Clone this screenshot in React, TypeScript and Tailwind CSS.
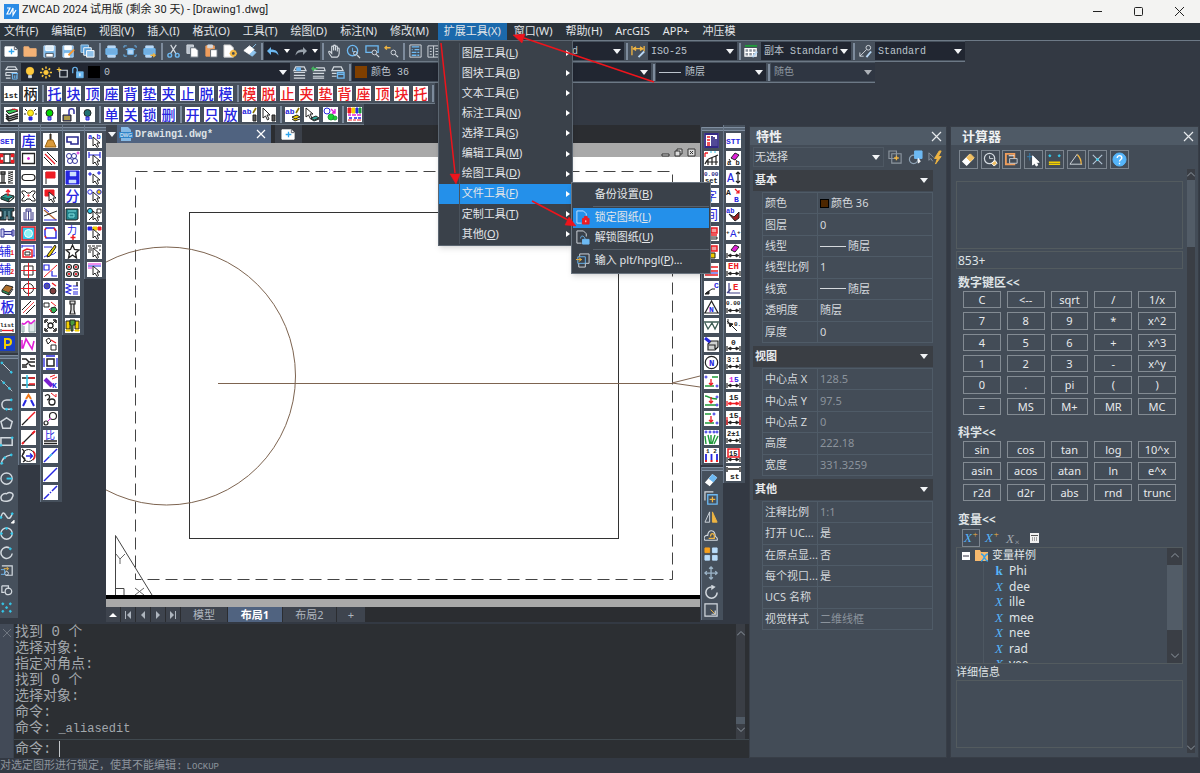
import React from 'react';

type Shape = [d: string, stroke: string, fill?: string, width?: number];
type Label = [text: string, x: number, y: number, color: string, size: number];
type Art = { name: string; shapes: Shape[]; labels: Label[]; big?: string };

const K = '#222222';
const B = '#2626e0';
const R = '#ee1c24';
const G = '#1f9a3a';
const Y = '#f4d000';
const C = '#35c8ea';
const W = '#ffffff';
const L = '#d3d9df';
const S = '#6db9f2';
const O = '#f0b542';
const M = '#e020d8';

const circ = (x: number, y: number, r: number) =>
  `M${x - r} ${y}a${r} ${r} 0 1 0 ${2 * r} 0a${r} ${r} 0 1 0 ${-2 * r} 0z`;

const art = (name: string, shapes: Shape[], labels: Label[] = []): Art => ({ name, shapes, labels });
const char = (text: string, color: string): Art => ({ name: text, shapes: [], labels: [], big: text + '|' + color });

const pointer: Shape = ['M6 4v9l2-2 2 3.5 1.5-1L10 10h3z', K, W, 1];
const dimLine: Shape[] = [
  ['M1 9v5M14 9v5M2 11.5h11', K, 'none', 1.2],
  ['M2 11.5l3-1.5v3zM13 11.5l-3-1.5v3z', K, K, 0.8],
];

/* Left tool columns */
const dieTools: Art[] = [
  art('SET', [], [['SET', 0, 11, B, 8]]),
  art('模板', [['M0 3h14v9H0zM4 3v9M10 3v9', K, 'none', 1.3], ['M0 3h3v3H0zM11 3h3v3h-3zM0 9h3v3H0zM11 9h3v3h-3z', R, R, 0.5]]),
  art('弹簧', [['M1 2h4v2H1zM2 4v9M4 4v9M0 13h6', K, 'none', 1.3], ['M8 2h5M8 4l5-2M8 6l5-2M8 8l5-2M8 10l5-2M8 12l5-2M8 13h5', K]]),
  art('出件', [['M1 9l5-3 8 2-5 3z', K, '#2a9d94'], ['M1 9v2l8 3v-3M9 14l5-4V8', K, '#1d6f60'], ['M8 8V2M6 4l2-2 2 2', R, 'none', 1.3]]),
  art('模座', [['M0 1h14v3h-2v6h2v3H8V9H6v4H0v-3h2V4H0z', K, '#24505c'], ['M5 4v8M9 4v8', '#7fb2bc']]),
  art('螺钉', [['M1 4h3v8H1zM4 6.5h8v3H4M12 5v6h2V5z', '#3a3a9c', '#c8c8f0']]),
  art('辅1', [], [['辅', -1, 12, B, 12], ['1', 10, 11, R, 7]]),
  art('辅2', [], [['辅', -1, 12, B, 12], ['2', 10, 12, R, 7]]),
  art('块体', [['M2 9l4-5 7 2-4 6z', K, '#b0702c'], ['M2 9v2l7 3v-2M9 14l4-6', K, '#2b8a50']]),
  char('板', B),
  art('list', [['M1 11v3M13 11v3', K], ['M2 12.5h11', R, 'none', 1.3]], [['list', 0, 9, K, 6]]),
];

const drawTools: Art[] = [
  art('直线', [['M2 2l10 10', L], [circ(2, 2, 1) + circ(12, 12, 1), C, C]]),
  art('构造线', [['M1 1l12 12', L, 'none', 0.8], [circ(4, 4, 1) + circ(10, 10, 1), C, C]]),
  art('多段线', [['M12 2H7a5 5 0 0 0 0 10h5', L, 'none', 1.6], [circ(7, 12, 1) + circ(12, 12, 1) + circ(12, 2, 1), C, C]]),
  art('多边形', [['M7 2l6 4-2 7H3L1 6z', L, 'none', 1.6]]),
  art('矩形', [['M1 3h12v8H1z', L, 'none', 1.6], [circ(1, 11, 1) + circ(13, 3, 1), C, C]]),
  art('圆弧', [['M1 12C2 6 6 3 12 2', L, 'none', 1.6], [circ(2, 11, 1) + circ(5, 5, 1) + circ(12, 2, 1), C, C]]),
  art('圆', [[circ(7, 7, 6), L, 'none', 1.5], ['M7 7h6', C, 'none', 2]]),
  art('云线', [['M2 11C-1 6 4 3 7 4c4-3 9 0 6 4-1 4-7 5-11 3z', L, 'none', 1.6]]),
  art('样条', [['M1 9c2-8 4-4 6-1s4 3 6-3', L, 'none', 1.5], [circ(1, 9, 1) + circ(13, 5, 1), C, C], ['M15 12v3h-3z', W, W]]),
  art('椭圆', [[circ(7, 7, 6), L, 'none', 1.5], [circ(7, 1.5, 1) + circ(1.5, 7, 1) + circ(12.5, 7, 1), C, C]]),
  art('椭圆弧', [['M10 2a6 6 0 1 0 3 6', L, 'none', 1.6], [circ(11, 3, 1), C, C]]),
  art('插入块', [['M2 2h11v10H6', L, 'none', 1.3], [circ(7, 10, 2), L], ['M1 6h4v5H1', S], ['M4 5h5M7 3l2 2-2 2', O]]),
  art('创建块', [['M2 3h7v3M2 3v7h3', L, 'none', 1.3], [circ(9, 9, 3.5), L, 'none', 1.3]]),
  art('点', [[circ(3, 3, 1) + circ(11, 3, 1) + circ(7, 7, 1) + circ(3, 11, 1) + circ(11, 11, 1), C, C]]),
];

const shapeTools: Art[] = [
  char('库', B),
  art('方孔', [['M1.5 2.5h12v10h-12z', K, 'none', 1.3], [circ(7.5, 7.5, 1), M, M]]),
  art('长圆', [['M4 4.5h7a3 3 0 0 1 0 6H4a3 3 0 0 1 0-6z', K, 'none', 1.2]]),
  art('异形', [['M1 3h3l2 2h3l2-2h3v2l-2 2v2l2 2v2h-3l-2-2H6l-2 2H1v-2l2-2V7L1 5z', K], [circ(7.5, 7.5, 0.7), R]]),
  art('导柱', [['M3 5v8h9V5M5 13V4h5v9M5 4V2h5v2M7.5 4v9', '#40408a', '#e4e0f0']]),
  art('外框圆', [['M1 1h13v13H1z', R, C, 1.5], [circ(7.5, 7.5, 4), W, '#8ff4f4']]),
  art('外形标注', [['M1 2h12M1 1v3M13 1v11M11 12h3', B], ['M2 7l4-2 5 1v7H2z', R, 'none', 1.5], ['M4 8h5v3H4z', K]]),
  art('方心', [['M3 3h9v9H3z', K], ['M7.5 0v15M0 7.5h15', R]]),
  art('圆心', [[circ(7.5, 7.5, 5), K], ['M7.5 0v15M0 7.5h15', R]]),
  art('平行线', [['M1 10L10 1M5 14l9-9', K], ['M2 13L13 2', R, 'none', 0.8]]),
  art('轮廓', [['M1 6v8h2V8M8 5v9h6V3', '#8fa8a8', '#dfe8e8'], ['M1 5c3 4 5-4 7-1s3 1 6-2', M, 'none', 1.6]]),
  art('折线', [['M1 3v8h1L5 2l6 10 2-8', M, 'none', 1.6]]),
  art('折弯', [['M1 4h4l3 3h6M1 10h4l3-3M8 9l2 2h4M9 4h5M1 12h5', K, 'none', 1.4]]),
  art('交叉', [['M1 4h13M1 11h13', K, 'none', 1.5], ['M8 4h6M8 10h6', R, 'none', 1.5], ['M6 1v13', C, 'none', 1.6]]),
  art('角度', [['M2 13L5 7M13 13l-3-6', B, 'none', 2], ['M5 6l2.5-4L10 6', '#f07818', 'none', 2]]),
  art('斜线虚', [['M1 14l6-6', K, 'none', 1.3], ['M7 8l7-7', R, 'none', 1.4]]),
  art('斜线', [['M2 13L13 2', K, 'none', 1.3], ['M1 14l2-2M11 4l3-3', R, 'none', 2]]),
  art('旋转', [[circ(7.5, 7.5, 6), K], ['M1 1c5 3 0 6 0 7s6 3 1 6', K, 'none', 1.4], ['M5 8h6M9 5.5L11.5 8 9 10.5', B, 'none', 1.3], ['M12 3a6 6 0 0 1 0 9', R, 'none', 1.5]]),
];

const editTools: Art[] = [
  art('清理', [['M7 1h1v6H7z', K, '#a05c18'], ['M5 7h5l3 7H2z', '#9b6410', '#d99a3a']]),
  art('断线', [['M2 3l10 10', R, 'none', 1.3], ['M4 1l10 10M1 6l8 8', K]]),
  art('红旗', [['M3 2v12', K], ['M3 2h9v6H3z', R, R]]),
  art('选旗', [['M2 2h9v6H2z', R, R], pointer]),
  art('修剪', [['M1 3l12 10', '#b06030', 'none', 1.3], ['M1 9L14 4', K], ['M1 13h13M1 1l5 4', B]]),
  art('倒角', [['M3 2h8l2 3v7H3l-1-3V4z', B, 'none', 1.4], ['M2 4l1-2M11 2l2 3M2 10l1 2', R, 'none', 1.5]]),
  art('绘线', [['M1 3h8M1 13c5-3 9-1 12-5', B], ['M12 1L5 10l-1 3 3-1 6-9z', K, Y]]),
  art('移角', [['M1 2h5v5H1zM9 8v5h5', B, 'none', 1.2], ['M1 14L14 2', R]]),
  art('移圆', [[circ(4, 5, 3), B, '#5050a0'], [circ(10, 10, 3), K, '#804040'], ['M9 2l4 3', R, 'none', 1.3]]),
  art('移多边', [['M1 3h5v4H1z', K], ['M8 8l4-1 2 3-3 3-3-1z', K, '#30b050'], ['M8 2l5 4M6 9l3 3', R]]),
  art('阵列', [['M2 2h3M2 2v3M13 2h-3M13 2v3M2 13v-3M2 13h3M13 13h-3M13 13v-3', K, 'none', 1.6], [circ(7.5, 7.5, 2.5), K, 'none', 1.3], ['M3 3l2 2M12 3l-2 2M3 12l2-2M12 12l-2-2', K]]),
  art('复制形', [['M3 3l3-2 2 3-3 3zM8 8h5v5H8z', K], ['M8 3l5 3', R, 'none', 1.3]]),
  art('缩放', [['M3 1h9M3 14h9M1 3v9M14 3v9', B, 'none', 1.3], ['M4 4h7v7H4z', K, 'none', 1.5]]),
  art('快捷', [['M2 5l7 7', '#7a20d0', 'none', 4], ['M7 3l5-2M9 5l5-2', R]], [['K', 9, 14, B, 8]]),
  art('反转', [['M2 4c4-4 7 2 2 4', K, 'none', 1.3], [circ(9, 10, 3), K, 'none', 1.3], ['M8 1l5 4V2', R]]),
  art('连接', [[circ(10, 5, 3.5) + circ(3, 12, 2), K, 'none', 1.2], ['M5 10l3-3', M]]),
  art('比', [['M1 11h13M1 13.5h13', K, 'none', 1.4]], [['比', 2, 9, B, 10]]),
  art('虚线一', [['M1 14L14 1', B, 'none', 1.5], ['M6 9l3-3', C, 'none', 1.5]]),
  art('虚线二', [['M1 14L14 1', B, 'none', 1.5]]),
  art('虚线三', [['M1 14l5-5M7 8l1-1M9 6l5-5', B, 'none', 1.5]]),
];

const assistTools: Art[] = [
  art('视口', [['M2 4h11v7H6v-2H2z', '#2a2a90', 'none', 1.6]]),
  art('圆组', [[circ(4, 5, 2.5) + circ(9, 5, 2.5) + circ(5, 10, 2.5) + circ(10, 10, 2.5), '#34349c'], [circ(13, 2, 1), M]]),
  art('保存', [['M1 1h13v13H1z', B, B], ['M5 2h6v4H5zM4 10h7v3H4z', '#cfe0ff', '#cfe0ff', 0.5]]),
  char('分', B),
  art('终端', [['M1 2h12v10l-2 1H1z', K, '#23838c'], ['M3 4h8M4 7h5v3H4z', '#80e0e0']]),
  art('力', [['M8 10v5M5.5 12.5h5', R, 'none', 1.5]], [['力', 2, 9, B, 10]]),
  art('星形', [['M7.5 1l2 4.5 4.5.5-3.5 3 1 5-4-3-4 3 1-5L1 6l4.5-.5z', K, 'none', 1.3]]),
  art('四孔', [[circ(4, 4, 2.5) + circ(11, 4, 2.5) + circ(4, 11, 2.5) + circ(11, 11, 2.5), K, '#ccc', 1.1], [circ(4, 4, 0.7) + circ(11, 4, 0.7) + circ(4, 11, 0.7) + circ(11, 11, 0.7), R, R]]),
  art('弹簧组', [['M1 3l5 2-5 2 5 2-5 2 5 2M8 5h5M8 8h5M8 11h5M8 13h5', B, 'none', 1.2], ['M12 1v4', K, 'none', 1.4]]),
  art('冲头', [['M5 1h5v3H5zM6 4v6l-1 4h5l-1-4V4', K, '#ddd', 1.2]]),
  art('镶件', [['M1 3h4v8H1zM10 3h4v8h-4z', K, Y], ['M5 2h5v5H8v6H6V7H5z', K, '#4a9a40'], ['M1 12h4v1H1zM10 12h4v1h-4z', Y, Y]]),
];

const pickTools: Art[] = [
  art('文字选', [pointer], [['a b', 1, 6, B, 7]]),
  art('尺寸选', [['M2 1v6M13 1v6M2 4h11', B, 'none', 1.2], pointer]),
  art('点选', [[circ(3, 4, 1.2) + circ(12, 3, 1.2), B, '#8888ee'], pointer]),
  art('圆选', [[circ(3, 4, 2.2), B], [circ(12, 4, 2.2), B, Y], pointer]),
  art('类型选', [[circ(3, 4, 2.5), K, C], ['M10 2h4v4h-4zM2 13l8-8', K], pointer]),
  art('颜色选', [['M1 2h4v3H1z', B, B], ['M6 2h4v3H6z', Y, Y], ['M11 2h3v3h-3z', R, R], pointer]),
  art('图案选', [['M1 2h3M5 2h3M9 2h5M2 4h3M7 4h4M1 6h4M1 8h3M12 6h2', K, 'none', 1.2], pointer]),
  art('线型选', [['M1 2h13M1 6h4', M, 'none', 1.2], ['M1 4h13', B], pointer]),
];

/* Right tool columns */
const textTools: Art[] = [
  art('表格', [['M1 1h13v13H1z', '#332a85', W, 1.8], ['M3 4h3M3 7h3M3 10h3M3 12h3', R, 'none', 1.4], ['M8 3v10M10 4v9M12 6v7', '#332a85', 'none', 1.7]]),
  art('曲线网', [['M1 2h3M1 2v4', R, 'none', 1.3], ['M6 1h2M10 1h2', C], ['M1 13C4 6 6 8 14 4M4 9v5M8 7v7M12 5v9M2 11h12', K, 'none', 1.2]]),
  art('0.00 set', [], [['0.00', 0, 6, '#2b2b8a', 6], ['set', 1, 13, K, 7]]),
  art('字', [['M1 2h4', R]], [['字', 1, 13, B, 12]]),
  art('间', [], [['间', 1, 12, B, 13]]),
  art('印章', [['M7 2h6v5H7zM5 9h8', R, '#f6a0a0', 1.5], ['M5 11h8v2H7z', K, '#eee']]),
  art('色板', [['M7 2h6v5H7z', R, '#f0a0a0', 1.5], ['M5 9h6v5H5z', K, Y]]),
  art('红线', [['M1 4h13M1 8h13M1 12h13', R, 'none', 1.5], ['M1 10h13', B]]),
  art('引线C', [['M2 12l6-4h3', K], ['M1 13l4-3v3z', K, K]], [['C', 10, 7, B, 8]]),
  art('三角N', [['M7.5 1L14 13H1zM0 13h15', K, 'none', 1.2]], [['N', 5, 12, B, 8]]),
  art('焊缝', [['M0 4h15M1 5l3 6 4-6 3 6 3-6', '#3c5c54', 'none', 1.3]]),
  art('图层框', [['M4 7l3-3h7v6l-3 3H4zM5 8h6v4', K, '#d0d0d0', 1.2], ['M1 1l5 4', B, 'none', 3]]),
  art('圆N', [[circ(7.5, 7.5, 6.2), K, 'none', 1.2]], [['N', 5, 11, B, 9]]),
  art('坐标下', [['M1 12h9M8 3h6', G, 'none', 1.5], ['M7 5v6M5 9l2 2 2-2', R, 'none', 1.3], [circ(2, 3, 1) + circ(13, 12, 1), B]]),
  art('坐标斜', [['M1 3c4 0 4 3 12 3M1 12h11', G, 'none', 1.5], ['M7 4v6M5 8l2 2 2-2', R, 'none', 1.3], [circ(13, 4, 1) + circ(13, 12, 1), B]]),
  art('坐标左', [['M1 3h6M1 12h9', G, 'none', 1.5], ['M7 5v6M5 9l2 2 2-2', R, 'none', 1.3], [circ(10, 3, 1) + circ(13, 12, 1), B]]),
  art('坐标草', [['M2 14L1 6M6 14L4 5M7 14V5M8 14l3-9M10 14l4-8', G, 'none', 1.4], [circ(2, 2, 1) + circ(6, 2, 1) + circ(10, 2, 1) + circ(13, 2, 1), B]]),
  art('编号', [['M2 6v6M7.5 6v6M13 6v6', B, 'none', 1.8], ['M2 12v2M7.5 12v2M13 12v2', R, 'none', 2]], [['1 2', 2, 5, K, 6]]),
];

const modifyTools: Art[] = [
  art('删除', [['M2 10l7-8 4 3-7 8z', W, W, 1.5], ['M6 6l3-4 4 3-3 4z', S, S, 1.5]]),
  art('复制', [['M1 10V1h9', L, 'none', 1.3], ['M4 4h10v10H4z', S, 'none', 1.4], ['M9 6v6M6 9h6', O, 'none', 1.3]]),
  art('镜像', [['M6 2v11H1z', L], ['M9 2v11h5z', O, O]]),
  art('偏移', [['M1 12h13a3 3 0 0 0-2-4C12 0 4 0 4 7a3 3 0 0 0-3 5z', L, 'none', 1.2], ['M5 10h6V8C11 4 7 4 7 8', O, 'none', 1.3]]),
  art('阵列修改', [['M1 1h5v5H1z', '#f7a01c', '#f7a01c'], ['M9 1h5v5H9zM1 9h5v5H1zM9 9h5v5H9z', '#b9dcfa', '#b9dcfa']]),
  art('移动', [['M7.5 1v13M1 7.5h13M5.5 3l2-2 2 2M5.5 12l2 2 2-2M3 5.5l-2 2 2 2M12 5.5l2 2-2 2', '#9db5c9', 'none', 1.4]]),
  art('旋转修改', [['M8 2a6 6 0 1 0 6 6', L, 'none', 1.6], ['M8 0l4 2-4 3z', L, L, 0.5]]),
  art('缩放修改', [['M1 1h13v13H1z', L, 'none', 1.3], ['M7 7l5 5', O], ['M12 8v4H8', L, 'none', 1.3]]),
];

const dimTools: Art[] = [
  art('STT', [], [['STT', 0, 11, B, 8]]),
  art('擦除ab', [['M5 7l4-5 4 2-4 5z', K, M], ['M3 8l2 3', K]], [['a b', 1, 14, K, 7]]),
  art('A高', [['M12 2v11M10 4l2-2 2 2M10 11l2 2 2-2', K, 'none', 1.2]], [['A', 1, 12, B, 12]]),
  art('AB', [['M9 1l4 4M13 2v3h-3', R, 'none', 1.2]], [['A', 0, 7, K, 8], ['B', 8, 14, B, 8]]),
  art('刷ab', [['M3 7l5 3 5-5v6l-4 3z', K, '#a02020']], [['ab', 0, 6, B, 7]]),
  art('+A+', [], [['A', 4, 12, B, 11], ['+', 0, 9, K, 6], ['+', 11, 9, K, 6]]),
  art('擦尺寸', [['M5 6l4-5 4 2-4 5z', K, M], ...dimLine]),
  art('EH', dimLine, [['EH', 2, 7, R, 9]]),
  art('E坐标', [['M3 2v10h11M1 12l4-4', '#40408a', 'none', 1.2]], [['E', 7, 9, R, 9]]),
  art('0.00', dimLine, [['0.00', 0, 6, K, 6]]),
  art('半径', [['M2 1v5M1 3l10 10M3 5l4 1-3 3z', K, K]], [['0.', 8, 8, K, 6]]),
  art('0', dimLine, [['0', 5, 8, K, 8]]),
  art('3:1', dimLine, [['3:1', 1, 7, K, 7]]),
  art('15彩', dimLine, [['1', 3, 8, M, 8], ['5', 8, 8, B, 8]]),
  art('15红线', [['M1 9v5M14 9v5M2 11.5h11', R, 'none', 1.3], ['M2 11.5l3-1.5v3zM13 11.5l-3-1.5v3z', R, R, 0.8]], [['15', 3, 8, K, 8]]),
  art('15红框', [...dimLine, ['M1 6v8M14 6v8', R, 'none', 1.3]], [['15', 3, 7, K, 8]]),
  art('2±1', dimLine, [['2±1', 1, 7, K, 7]]),
  art('15方', [...dimLine, ['M2 1h11v8H2z', R, 'none', 1.5]], [['15', 3, 8, K, 7]]),
  art('反15', [['M1 1v5M14 1v5M2 3h11', K, 'none', 1.4]], [['st', 4, 13, K, 8]]),
];

/* Toolbars above the drawing */
const plus: Shape = ['M8 5v6M5 8h6', '#2da4ee', 'none', 1.4];
const fileTools: Art[] = [
  art('新建', [['M1 3h10l3 3v7H1z', W, W], ['M11 3v3h3', '#555b66'], plus]),
  art('打开', [['M1 3h5l1 2h7v8H1z', '#f3b276', '#f3b276']]),
  art('存盘', [['M2 2h12v12H2z', '#b9d8f5', '#79b7e8'], ['M4 2h8v5H4z', W, '#dcecf8'], ['M4 10h8v4H4z', '#444d59', '#fff']]),
  art('另存', [['M2 2h11v12H2z', '#b9d8f5', '#79b7e8'], ['M4 2h7v4H4zM4 10h5v4H4z', W, W], ['M8 12l6-6', '#f4962f', 'none', 2]]),
  art('全部存', [['M1 1h8v8H1z', '#a8cdea', '#579dd6'], ['M4 4h8v8H4z', W, '#579dd6'], ['M7 7h8v7H7z', W, '#8fc1e9']]),
];
const plotTools: Art[] = [
  art('打印', [['M4 2h8v3H4zM4 10h8v4H4z', '#b9d8f5', '#b9d8f5'], ['M2 5h12v6H2z', S, '#72afe1']]),
  art('预览', [['M1 4V2h3M12 2h2v2M1 11v2h3M12 13h2v-2', S], ['M5 5h6v6H5zM3 6h10', S, '#b9d8f5']]),
  art('发布', [['M4 2h8v3H4zM4 10h6v4H4z', '#b9d8f5', '#b9d8f5'], ['M2 5h12v6H2z', S, '#72afe1'], ['M9 12h5M12 10l2 2-2 2', O, 'none', 1.4]]),
];
const clipTools: Art[] = [
  art('剪切', [['M5 1l6 10M11 1L5 10', L, 'none', 1.3], [circ(4, 12, 2) + circ(12, 12, 2), S, 'none', 1.5]]),
  art('复制文件', [['M2 1h7v9H2z', L, '#bac3cd'], ['M6 4h5l3 3v7H6z', '#5a6470', W]]),
  art('粘贴', [['M2 2h9v11H2z', '#ef9d5c', '#ef9d5c'], ['M4 1h5v3H4z', L, L], ['M7 6h7v8H7z', '#5a6470', W]]),
  art('特性复制', [['M1 1h7l3 3v10H1z', '#ccc', W], [circ(11, 10, 2.5), O, '#434c57', 2], ['M11 6v2M11 12v2M7 10h2M13 10h2', O, 'none', 1.6]]),
  art('格式刷', [['M8 2l5 4-5 5-6-4z', W, W], ['M11 4l4-4M8 11l3 2 4-4-3-2', '#8ec5ef', '#8ec5ef']]),
];
const zoomTools: Art[] = [
  art('平移', [['M5 14C3 11 1 9 2 8s2 1 3 2V3c0-1 1.500-1 2 0v4-5c0-1 2-1 2 0v5-4c0-1 2-1 2 0v5-3c0-1 2-1 2 0v5c0 2-1 3-2 4z', L, 'none', 1.2]]),
  art('实时缩放', [[circ(7, 7, 5.5), S, 'none', 1.4], ['M7 4v4h3', S], [circ(10, 10, 2), L], ['M12 12l3 3', L, 'none', 1.3]]),
  art('窗口缩放', [['M1 2h13v7H1z', S, 'none', 1.4], [circ(10, 9, 2.5), L, '#4a525e'], ['M12 11l3 3', L, 'none', 1.3]]),
  art('上一个', [['M1 4h6M3 2L1 4l2 2', O, 'none', 1.4], [circ(10, 9, 2.5), L], ['M12 11l3 3', L, 'none', 1.3]]),
];
const panelTools: Art[] = [
  art('特性', [['M2 1h12v13H2z', L], ['M4 3h8M4 6h1M7 6h5M4 9h5M10 9h2M4 12h5M10 12h2', S, 'none', 1.4]]),
  art('设计中心', [['M1 2h13v12H1zM7 2v12', L], ['M3 5h2M3 8h2M3 11h2M9 5h3M9 8h3M9 11h3', L]]),
];
const layerTools: Art[] = [
  art('图层置前', [['M4 2h9l2 4H2zM2 8h12M2 11h12M2 14h12', L, 'none', 1.3], ['M5 3h4v3H5z', S, S]]),
  art('上一图层', [['M6 3h8l1 3H3zM2 9h12M2 12h12M2 14h12', L, 'none', 1.3], ['M1 4h6M3 2L1 4l2 2', '#43b15d', 'none', 1.6]]),
  art('图层状态', [['M4 2h8l2 4H2zM2 9h5M2 12h5', L, 'none', 1.3], ['M8 8h7v6H8zM8 10h7', S, 'none', 1.4]]),
];
const layerManager = art('图层管理器', [['M4 2h8l2 3H2zM2 8h12M2 8v3h5M2 14h5', L, 'none', 1.3], ['M9 9h5v6H9zM8 9h7M11 11v3M13 11v3', S]]);

/* Marks shown inside the layer list */
const layerState: Art[] = [
  art('开', [[circ(8, 6, 5), '#ffc93c', '#ffc93c'], ['M6 12h4v3H6z', L, L]]),
  art('冻结', [[circ(8, 8, 3), '#ffc93c', '#ffc93c'], ['M8 0v3M8 13v3M0 8h3M13 8h3M2.5 2.5l2 2M11.5 11.5l2 2M13.5 2.5l-2 2M2.5 13.5l2-2', '#ffc93c', 'none', 2]]),
  art('视口冻结', [['M5 5h10v9H5z', L, 'none', 1.5], ['M4 1v6M1 4h6', '#ffc93c', 'none', 1.4]]),
  art('锁', [['M6 7h9v8H6z', S, S], ['M1 9V4c0-4 6-4 6 0v3', S, 'none', 1.6], ['M10.5 9v4', W, 'none', 1.5]]),
];

const layerSwitches: Art[] = [
  art('图层集', [['M2 4l9-2 3 2-9 3z', K, '#33c24e'], ['M2 7l3 3 9-3M2 9l3 3 9-3M2 11l3 3 9-3', K, 'none', 1.4], ['M8 2l6 1', R]]),
  art('灯亮', [[circ(7.5, 6, 3), '#b8a000', '#ffee22'], ['M6 10h3v3H6z', B, B], ['M2 2l2 2M13 2l-2 2M1 7h2M14 7h-2', K]]),
  art('灯绿', [[circ(7.5, 6, 3.5), K, '#00d800'], ['M6 10h3v3H6z', B, '#8080e0']]),
  art('解锁层', [['M2 8h8v6H2z', K, '#62628e'], ['M8 8V4c0-3 5-3 5 0v3', '#3e3ea6', 'none', 1.6], ['M3 10h6M3 12h6', Y]]),
  art('灯灭', [[circ(7.5, 6, 3.5), K, '#1f7070'], ['M6 10h3v3H6z', B, '#8080e0']]),
];
const abFind = art('文字查找', [['M11 8h3v6h-3z', K, '#555'], ['M11 6l3-5', '#857000', 'none', 1.6]], [['ab', 0, 7, B, 8]]);
const cursorFind = art('点选查找', [['M2 1v10l2.5-2 2 4 1.5-1-2-4h3z', K, W], ['M11 8h3v6h-3z', K, '#555']]);
const abLayer = art('文字图层', [['M7 10l5-2 3 2-5 2zM7 12l3 2 5-2', K, Y], ['M11 6l3-5', '#857000', 'none', 1.6]], [['ab', 0, 7, B, 8]]);
const cursorLayer = art('点选图层', [['M2 1v9l2.5-2 2 4 1.5-1-2-4h3z', K, W], ['M7 11l5-2 3 2-5 2zM7 12l3 2 5-2', K, '#30a89c']]);
const matchLayer = art('图层匹配', [[circ(4, 4, 3), B], [circ(8, 10, 3) + circ(12, 11, 2), G, '#19d52f'], ['M8 2l4 4M12 2v4H9', M, 'none', 1.4]]);
const palette = art('调色板', [
  ['M1 1h3v5H1z', R, R], ['M5 1h3v5H5z', Y, Y], ['M9 1h2v5H9z', B, B], ['M12 1h2v5h-2z', G, G],
  ['M1 8h3M5 8h4M10 8h4', M, 'none', 1.4], ['M2 11h3M7 11h3M11 11h3', B, 'none', 1.4], ['M1 13h4M6 13h3M10 13h4', R, 'none', 1.2],
]);

const blueFirst = ['托', '块', '顶', '座', '背', '垫', '夹', '止', '脱', '模'];

const Drawing: React.FC<{ art: Art; className: string; box: number }> = ({ art: a, className, box }) => (
  <svg className={className} viewBox={`0 0 ${box} ${box}`} aria-hidden="true">
    {a.shapes.map(([d, stroke, fill, width], i) => (
      <path key={i} d={d} stroke={stroke} fill={fill ?? 'none'} strokeWidth={width ?? 1} />
    ))}
    {a.labels.map(([text, x, y, color, size], i) => (
      <text key={i} x={x} y={y} fill={color} fontSize={size} fontWeight={size > 9 ? 400 : 700} fontFamily="'Liberation Mono', 'Noto Sans CJK SC', monospace">
        {text}
      </text>
    ))}
  </svg>
);

const Tile: React.FC<{ art: Art }> = ({ art: a }) => {
  const [text, color] = (a.big ?? '').split('|');
  return (
    <button aria-label={a.name} className="flex w-[19px] shrink-0 items-center justify-center">
      {text ? (
        <span className="block h-[15px] w-[15px] whitespace-nowrap bg-white text-center text-[14px] font-medium leading-[15px]" style={{ color }}>
          {text}
        </span>
      ) : (
        <Drawing art={a} box={15} className="h-[15px] w-[15px] bg-white" />
      )}
    </button>
  );
};

const Plain: React.FC<{ art: Art }> = ({ art: a }) => (
  <button aria-label={a.name} className="flex w-[19px] shrink-0 items-center justify-center">
    <Drawing art={a} box={16} className="h-[15px] w-[15px]" />
  </button>
);

const Grip = () => <span className="ml-[2px] mr-px h-[17px] w-[2px] shrink-0 bg-[#7d8b9c]" />;

const Down: React.FC = () => (
  <svg viewBox="0 0 8 5" className="h-[5px] w-2 shrink-0" aria-hidden="true">
    <path d="M0 0h8L4 5z" fill="#f2f4f6" />
  </svg>
);

const Combo: React.FC<{ label: string; value: string; className?: string; children?: React.ReactNode }> = ({ label, value, className = '', children }) => (
  <div className={`flex h-[18px] shrink-0 items-center bg-[#212631] px-[3px] text-[#bcc4cd] ${className}`}>
    {children && <span className="mr-1 flex items-center gap-1">{children}</span>}
    <select aria-label={label} className="h-[18px] min-w-0 flex-1 appearance-none bg-transparent font-['Liberation_Mono','Noto_Sans_CJK_SC',monospace] text-[10px] outline-none">
      <option>{value}</option>
    </select>
    <Down />
  </div>
);

const Column: React.FC<{ tools: Art[]; height: string; plain?: boolean; clipped?: boolean }> = ({ tools, height, plain, clipped }) => (
  <div className={`border-[#6c7a8b] bg-[#46505c] ${clipped ? 'w-[18px]' : 'w-[22px] border-l'}`}>
    <div className="mt-[2px] h-1 border-y border-[#7f8ea0] bg-[#596675]" />
    <div className={`grid auto-rows-fr ${clipped ? '-ml-[2px]' : ''} ${height}`}>
      {tools.map((t) => (plain ? <Plain key={t.name} art={t} /> : <Tile key={t.name} art={t} />))}
    </div>
  </div>
);

const menus = ['文件(F)', '编辑(E)', '视图(V)', '插入(I)', '格式(O)', '工具(T)', '绘图(D)', '标注(N)', '修改(M)', '扩展工具(X)', '窗口(W)', '帮助(H)', 'ArcGIS', 'APP+', '冲压模'];

const extItems: [string, string][] = [
  ['图层工具', 'L'], ['图块工具', 'B'], ['文本工具', 'E'], ['标注工具', 'N'], ['选择工具', 'S'],
  ['编辑工具', 'M'], ['绘图工具', 'D'], ['文件工具', 'F'], ['定制工具', 'T'], ['其他', 'O'],
];

const lockArt = art('锁定', [['M9 1H2v13h5M9 1l3 3v2', '#c4e2ff'], ['M8 9h7v6H8zM10 9V7h3v2', R, R], ['M11.5 11v2', W]]);
const unlockArt = art('解锁', [['M9 1H2v13h5M9 1l3 3v3', L], ['M8 10h7v5H8z', S, S], ['M6 9c0-4 4-3 5 1', S]]);
const plotIn = art('输入', [['M5 4V1h10v10h-4M4 11v4h7v-4', L], ['M3 4h8v7H3z', S], ['M1 7h6M4 5l3 2-3 2', O]]);

const SubItem: React.FC<{ text: string; mark: string; tail?: string; icon?: Art; active?: boolean }> = ({ text, mark, tail = ')', icon, active }) => (
  <button className={`flex h-5 items-center text-left ${active ? 'bg-[#2490ea]' : ''}`}>
    <span className="flex w-5 justify-center">{icon && <Drawing art={icon} box={16} className="h-[15px] w-[15px]" />}</span>
    <span className="ml-[2px] whitespace-nowrap">{text}(<u>{mark}</u>{tail}</span>
  </button>
);

const ExtMenu = () => (
  <div className="absolute left-0 top-full z-20 grid h-[206px] w-[135px] auto-rows-fr border border-[#5b6570] bg-[#3a414a] pb-px pt-[2px] text-[#e3e6e9] shadow-md">
    {extItems.map(([text, mark]) => (
      <div key={mark} className={`relative flex ${mark === 'F' ? 'bg-[#2490ea]' : ''}`}>
        <button className="flex flex-1 items-center justify-between pr-[2px] text-left">
          <span className="ml-5 h-full flex-1 content-center border-l border-[#4a535d] pl-[2px]">{text}(<u>{mark}</u>)</span>
          <svg viewBox="0 0 4 6" className="h-[6px] w-1" aria-hidden="true"><path d="M0 0l4 3-4 3z" fill="#fff" /></svg>
        </button>
        {mark === 'F' && (
          <div className="absolute -top-[2px] left-[132px] flex w-[140px] flex-col border border-[#6a747f] bg-[#3a414a] px-px py-[2px] shadow-md">
            <SubItem text="备份设置" mark="B" />
            <hr className="my-px ml-5 border-[#56606b]" />
            <SubItem text="锁定图纸" mark="L" icon={lockArt} active />
            <SubItem text="解锁图纸" mark="U" icon={unlockArt} />
            <hr className="my-px ml-5 border-[#56606b]" />
            <SubItem text="输入 plt/hpgl" mark="P" tail=")..." icon={plotIn} />
          </div>
        )}
      </div>
    ))}
  </div>
);

const TitleBar = () => (
  <header className="flex h-[23px] items-center bg-[#f3f3f2] text-[11px] text-[#222]">
    <svg viewBox="0 0 15 15" className="ml-1 h-[15px] w-[15px]" aria-hidden="true">
      <path d="M0 0h15v15H0z" fill="#2a8be6" />
      <path d="M3 4h3L3 10h3l3-6v7l3-5" stroke="#fff" fill="none" strokeWidth="1.2" />
    </svg>
    <h1 className="ml-[3px] flex-1 pb-[3px] font-[Roboto,'Noto_Sans_CJK_SC',sans-serif]">ZWCAD 2024 试用版 (剩余 30 天) - [Drawing1.dwg]</h1>
    <button aria-label="最小化" className="w-[41px]"><svg viewBox="0 0 11 11" className="mx-auto h-[11px] w-[11px]"><path d="M1 5.5h9" stroke="#222" /></svg></button>
    <button aria-label="最大化" className="w-[41px]"><svg viewBox="0 0 11 11" className="mx-auto h-[11px] w-[11px]"><rect x="1.5" y="1.5" width="8" height="8" rx="1" stroke="#222" fill="none" /></svg></button>
    <button aria-label="关闭" className="w-[41px]"><svg viewBox="0 0 11 11" className="mx-auto h-[11px] w-[11px]"><path d="M1 1l9 9M10 1l-9 9" stroke="#222" /></svg></button>
  </header>
);

const MenuBar = () => (
  <nav className="flex h-[18px] border-b border-[#6d7986] bg-[#2b333b] text-[11px] text-[#e3e6e9]">
    {menus.map((m) => {
      const open = m.startsWith('扩展');
      return (
        <div key={m} className={`relative ${open ? 'mr-[3px] bg-[#1b69ac]' : ''}`}>
          <button className={`h-[17px] whitespace-nowrap ${open ? 'px-[6px]' : 'pl-1 pr-[9px]'}`}>{m}</button>
          {open && <ExtMenu />}
        </div>
      );
    })}
  </nav>
);

const bar = 'flex h-[21px] w-max items-center border-b border-l border-[#6d7986] bg-[#46505c] pl-px';

const Toolbars = () => (
  <div className="h-[84px] bg-[#333943]">
    <div className={bar}>
      {fileTools.map((t) => <Plain key={t.name} art={t} />)}
      <Grip />
      {plotTools.map((t) => <Plain key={t.name} art={t} />)}
      <Grip />
      {clipTools.map((t) => <Plain key={t.name} art={t} />)}
      <Grip />
      <div className="flex h-[18px] w-[56px] items-center justify-around bg-[#212631]">
        <button aria-label="撤销"><svg viewBox="0 0 12 9" className="h-[9px] w-3"><path d="M4 0v2.5c5 0 7 2 7.500 6C10 6 8 5 4 5v3L0 4z" fill="#6db9f2" /></svg></button>
        <svg viewBox="0 0 6 4" className="h-1 w-[6px]"><path d="M0 0h6L3 4z" fill="#fff" /></svg>
        <button aria-label="重做"><svg viewBox="0 0 12 9" className="h-[9px] w-3"><path d="M8 0v2.5C3 2.500 1 4.500.500 8.500 2 6 4 5 8 5v3l4-4z" fill="#98a1ab" /></svg></button>
        <svg viewBox="0 0 6 4" className="h-1 w-[6px]"><path d="M0 0h6L3 4z" fill="#fff" /></svg>
      </div>
      <Grip />
      {zoomTools.map((t) => <Plain key={t.name} art={t} />)}
      <Grip />
      {panelTools.map((t) => <Plain key={t.name} art={t} />)}
      <Combo label="文字样式" value="Standard" className="ml-[83px] w-[97px]" />
      <Grip />
      <Plain art={art('标注样式', [['M1 2v10M14 2v6M2 5h11', O, 'none', 1.4], ['M2 5l3-2v4zM13 5l-3-2v4z', O, O], ['M8 14l6-6', '#b9d8f5', 'none', 2]])} />
      <Combo label="标注样式" value="ISO-25" className="w-[89px]" />
      <Grip />
      <Plain art={art('表格样式', [['M1 2h13', G, 'none', 2], ['M1 5h12v8H1zM5 5v8M9 5v8M1 9h12', W, '#8a939e', 1.3], ['M9 14l5-6', '#b9d8f5', 'none', 2]])} />
      <Combo label="表格样式" value="副本 Standard" className="w-[90px]" />
      <Grip />
      <Plain art={art('引线样式', [[circ(11, 4, 2.5), L], ['M9 6l-7 7M2 13V9M2 13h4', L], ['M9 14l5-6', '#b9d8f5', 'none', 2]])} />
      <Combo label="引线样式" value="Standard" className="w-[90px]" />
    </div>
    <div className={bar}>
      <Plain art={layerManager} />
      <Combo label="图层" value="0" className="w-[269px]">
        {layerState.map((s) => <Drawing key={s.name} art={s} box={16} className="h-[13px] w-3" />)}
        <span className="h-3 w-3 bg-black" />
      </Combo>
      {layerTools.map((t) => <Plain key={t.name} art={t} />)}
      <Grip />
      <Combo label="颜色" value="颜色 36" className="w-[150px]">
        <span className="h-3 w-3 bg-[#7f3f00]" />
      </Combo>
      <Grip />
      <Combo label="线型" value="随层" className="w-[144px]" />
      <Grip />
      <Combo label="线宽" value="随层" className="w-[110px]">
        <span className="h-px w-[22px] bg-[#bcc4cd]" />
      </Combo>
      <Grip />
      <Combo label="打印样式" value="随色" className="w-[104px] opacity-60" />
    </div>
    <div className={bar}>
      <Tile art={art('1st', [], [['1st', 0, 12, K, 8]])} />
      <Tile art={char('柄', K)} />
      <Grip />
      {blueFirst.map((c) => <Tile key={c} art={char(c, B)} />)}
      <Grip />
      {[...blueFirst].reverse().map((c) => <Tile key={c} art={char(c, R)} />)}
      <Grip />
    </div>
    <div className={bar}>
      {layerSwitches.map((t) => <Tile key={t.name} art={t} />)}
      <Grip />
      {['单', '关', '锁', '删'].map((c) => <Tile key={c} art={char(c, B)} />)}
      <Grip />
      {['开', '只', '放'].map((c) => <Tile key={c} art={char(c, B)} />)}
      <Tile art={abFind} />
      <Tile art={cursorFind} />
      <Grip />
      <Tile art={abLayer} />
      <Tile art={cursorLayer} />
      <Tile art={matchLayer} />
      <Grip />
      <Tile art={palette} />
    </div>
  </div>
);

const LeftTools = () => (
  <div className="flex w-[106px] shrink-0 items-start">
    <div>
      <Column clipped tools={[...dieTools, art('P', [['M0 0h15v15H0z', '#1a3fc4', '#1a3fc4'], ['M5 13V3h3a2.5 2.5 0 0 1 0 6H5', Y, 'none', 2]])]} height="h-[222px]" />
      <Column clipped plain tools={drawTools} height="h-[259px]" />
    </div>
    <Column tools={shapeTools} height="h-[334px]" />
    <Column tools={editTools} height="h-[371px]" />
    <Column tools={assistTools} height="h-[204px]" />
    <Column tools={pickTools} height="h-[148px]" />
  </div>
);

const RightTools = () => (
  <div className="ml-px flex w-[48px] shrink-0 items-start">
    <div>
      <Column tools={textTools} height="h-[334px]" />
      <Column plain tools={modifyTools} height="h-[149px]" />
    </div>
    <Column tools={dimTools} height="h-[352px]" />
  </div>
);

const CadCanvas = () => (
  <svg className="min-h-[438px] w-full flex-1 bg-white" fill="none" aria-label="布局1">
    <rect x="29.5" y="14.5" width="537" height="408" stroke="#444" strokeDasharray="12 6" />
    <rect x="83.5" y="55.5" width="429" height="326" stroke="#333" />
    <circle cx="60.5" cy="219" r="129" stroke="#7d6450" />
    <path d="M112 226.5h454M594 219l-28 7 28 4" stroke="#7d6450" />
    <path d="M9.5 438v-59.5L46 438M9.5 431.5H18v7" stroke="#444" />
    <path d="M10 397l4 5 5-5M14 402v5M29 431l9 7M38 431l-9 7" stroke="#666" />
  </svg>
);

const NavTab: React.FC<{ d: string; label: string; bright?: boolean }> = ({ d, label, bright }) => (
  <button aria-label={label} className="flex w-[14px] items-center justify-center bg-[#3e444e]">
    <svg viewBox="0 0 8 8" className="h-2 w-2"><path d={d} fill={bright ? '#fff' : '#aeb5be'} /></svg>
  </button>
);

const Workspace = () => (
  <main className="flex min-w-0 flex-1 flex-col">
    <div className="flex h-[18px] bg-[#2b2d31] text-[#dfe3e7]">
      <button aria-label="文档列表" className="flex w-[11px] items-center justify-center bg-[#3e444e]"><Down /></button>
      <div className="flex w-[154px] items-center bg-[#506380]">
        <svg viewBox="0 0 14 14" className="ml-[2px] h-[14px] w-[14px]" aria-hidden="true">
          <path d="M2 0h7l3 3v11H2z" fill="#85b9e4" />
          <path d="M0 5h14v6H0z" fill="#2f84c8" />
          <text x="1" y="10" fontSize="5" fill="#fff" fontFamily="Liberation Sans">DWG</text>
        </svg>
        <span className="ml-[2px] flex-1 font-['Liberation_Mono',monospace] text-[10px] font-bold">Drawing1.dwg*</span>
        <button aria-label="关闭文档" className="mr-1 w-3">
          <svg viewBox="0 0 12 12" className="h-3 w-3"><path d="M2 2l8 8M10 2l-8 8" stroke="#fff" strokeWidth="1.2" /></svg>
        </button>
      </div>
      <button aria-label="新建文档" className="ml-1 flex w-[27px] items-center justify-center bg-[#3b4049]">
        <Drawing box={16} className="h-[15px] w-[15px]" art={fileTools[0]} />
      </button>
    </div>
    <div className="flex h-[14px] items-end justify-end gap-1 bg-[#a9a9a9] pr-1">
      {['M1 6h7v2H1z', 'M1 3h5v5H1zM3 3V1h5v5H6', 'M1 1h7v7H1zM3 3l3 3M6 3L3 6'].map((d) => (
        <svg key={d} viewBox="0 0 9 9" className="h-[9px] w-[9px]" aria-hidden="true"><path d={d} fill="#ddd" stroke="#333" /></svg>
      ))}
    </div>
    <CadCanvas />
    <div className="h-1 bg-black" />
    <div className="h-2 bg-[#a9a9a9]" />
    <div className="flex h-[15px] gap-px bg-[#2b2d31] text-[11px] leading-[14px] text-[#aeb5be]">
      <NavTab bright label="展开" d="M0 6h8L4 2z" />
      <NavTab label="第一个" d="M1 0h1v8H1zM7 0v8L3 4z" />
      <NavTab label="上一页" d="M6 0v8L2 4z" />
      <NavTab label="下一页" d="M2 0v8l4-4z" />
      <NavTab label="最后" d="M6 0h1v8H6zM1 0v8l4-4z" />
      <button className="w-[46px] bg-[#3e444e]">模型</button>
      <button className="w-[54px] bg-[#506380] font-bold text-white">布局1</button>
      <button className="w-[53px] bg-[#3e444e]">布局2</button>
      <button className="w-[28px] bg-[#3e444e]">+</button>
    </div>
  </main>
);

const log = ['找到 0 个', '选择对象:', '指定对角点:', '找到 0 个', '选择对象:', '命令:'];

const Chevron: React.FC<{ up?: boolean }> = ({ up }) => (
  <svg viewBox="0 0 8 5" className="mx-auto my-[3px] h-[5px] w-2 shrink-0" aria-hidden="true">
    <path d={up ? 'M0 4.500l4-4 4 4' : 'M0 .500l4 4 4-4'} fill="none" stroke="#8d96a0" />
  </svg>
);

const CommandLine = () => (
  <section className="mt-[2px] flex h-[134px] bg-[#2c2f33] font-['Liberation_Mono','Noto_Sans_CJK_SC',monospace] text-[14px] text-[#a3a8ad]">
    <button aria-label="关闭命令行" className="flex w-[14px] items-start justify-center border-r border-[#3a424d] bg-[#424a57] pt-1">
      <svg viewBox="0 0 10 10" className="h-[10px] w-[10px]"><path d="M1 1l8 8M9 1l-8 8" stroke="#6f7680" /></svg>
    </button>
    <div className="flex flex-1 flex-col">
      <div className="flex h-[115px]">
        <div className="flex-1 pl-px leading-4">
          {log.map((line, i) => <p key={i}>{line}</p>)}
          <p>命令:<span className="ml-[7px] text-xs">_aliasedit</span></p>
        </div>
        <div className="mr-1 flex w-[9px] flex-col bg-[#3a3e45] py-1">
          <Chevron up />
          <span className="mt-auto h-[7px] bg-[#505a65]" />
          <Chevron />
        </div>
      </div>
      <label className="flex h-[19px] items-center border-t border-[#40494f] pl-px">
        命令:
        <span className="ml-2 h-4 w-px bg-[#c4c8cc]" />
        <input className="min-w-0 flex-1 bg-transparent outline-none" />
      </label>
    </div>
  </section>
);

const PanelTitle: React.FC<{ title: string; inset?: boolean }> = ({ title, inset }) => (
  <div className={`flex h-[18px] items-center justify-between bg-[#4f5a66] pr-1 text-[13px] font-bold text-[#eef0f2] ${inset ? 'pl-[11px]' : 'pl-[6px]'}`}>
    <h2 className="leading-[18px]">{title}</h2>
    <button aria-label={`关闭${title}`}>
      <svg viewBox="0 0 11 11" className="h-[11px] w-[11px]"><path d="M1 1l9 9M10 1l-9 9" stroke="#e6e9ec" strokeWidth="1.2" /></svg>
    </button>
  </div>
);

type Prop = { k: string; v: string; muted?: boolean; swatch?: boolean; line?: boolean };

const groups: { title: string; height: string; rows: Prop[] }[] = [
  {
    title: '基本',
    height: 'h-[151px]',
    rows: [
      { k: '颜色', v: '颜色 36', swatch: true },
      { k: '图层', v: '0' },
      { k: '线型', v: '随层', line: true },
      { k: '线型比例', v: '1' },
      { k: '线宽', v: '随层', line: true },
      { k: '透明度', v: '随层' },
      { k: '厚度', v: '0' },
    ],
  },
  {
    title: '视图',
    height: 'h-[108px]',
    rows: [
      { k: '中心点 X', v: '128.5', muted: true },
      { k: '中心点 Y', v: '97.5', muted: true },
      { k: '中心点 Z', v: '0', muted: true },
      { k: '高度', v: '222.18', muted: true },
      { k: '宽度', v: '331.3259', muted: true },
    ],
  },
  {
    title: '其他',
    height: 'h-[129px]',
    rows: [
      { k: '注释比例', v: '1:1', muted: true },
      { k: '打开 UC...', v: '是' },
      { k: '在原点显...', v: '否' },
      { k: '每个视口...', v: '是' },
      { k: 'UCS 名称', v: '' },
      { k: '视觉样式', v: '二维线框', muted: true },
    ],
  },
];

const Properties = () => (
  <aside className="mt-px flex w-[198px] shrink-0 flex-col border border-[#383e47] bg-[#434c57] text-[11px] text-[#d5d9dd]">
    <PanelTitle title="特性" />
    <div className="mt-[2px] flex items-center pl-[3px]">
      <div className="flex h-5 w-[131px] items-center border border-[#4e5863] pl-px pr-[3px]">
        <select aria-label="选择集" className="min-w-0 flex-1 appearance-none bg-transparent outline-none">
          <option>无选择</option>
        </select>
        <Down />
      </div>
      <div className="flex flex-1 justify-around px-px">
        <Plain art={art('切换加选', [['M1 1h8v8H1zM4 4h10v10H4z', '#8d96a0', 'none', 1.2], ['M9 6v5M6.5 8.5h5', O, 'none', 1.4]])} />
        <Plain art={art('选择对象', [[circ(6, 10, 4.5), '#8fa3b5', 'none', 1.3], ['M7 1h8v8H7z', S, S], ['M11 9v5l2-2z', W, W]])} />
        <Plain art={art('快速选择', [['M1 3v8l2-2 2 3M1 3l5 5', '#8d96a0'], ['M12 1L7 9h3l-2 6 6-8h-3l3-6z', O, O]])} />
      </div>
    </div>
    {groups.map((g) => (
      <section key={g.title} className="ml-[3px] mr-[13px] mt-[3px]">
        <button className="flex h-[21px] w-full items-center justify-between bg-[#3a3e44] pl-[2px] pr-[5px] font-bold text-[#e9ebed]">
          {g.title}
          <Down />
        </button>
        <div className="pl-[9px] pt-px">
          <table className={`w-full table-fixed border-collapse ${g.height}`}>
            <tbody>
              {g.rows.map((r) => (
                <tr key={r.k}>
                  <th scope="row" className="w-[55px] whitespace-nowrap border border-[#4f5b67] py-0 pl-[2px] pr-0 text-left font-normal leading-4">{r.k}</th>
                  <td className={`border border-[#4f5b67] py-0 pl-[2px] leading-4 ${r.muted ? 'text-[#8b939c]' : ''}`}>
                    <span className="flex items-center gap-[2px]">
                      {r.swatch && <span className="h-[9px] w-[9px] border border-black bg-[#4c2600]" />}
                      {r.line && <span className="h-px w-[26px] bg-[#d5d9dd]" />}
                      {r.v}
                    </span>
                  </td>
                </tr>
              ))}
            </tbody>
          </table>
        </div>
      </section>
    ))}
  </aside>
);

const keypad = [
  'C', '<--', 'sqrt', '/', '1/x', '7', '8', '9', '*', 'x^2', '4', '5', '6', '+', 'x^3',
  '1', '2', '3', '-', 'x^y', '0', '.', 'pi', '(', ')', '=', 'MS', 'M+', 'MR', 'MC',
];
const scientific = ['sin', 'cos', 'tan', 'log', '10^x', 'asin', 'acos', 'atan', 'ln', 'e^x', 'r2d', 'd2r', 'abs', 'rnd', 'trunc'];

const calcTools: Art[] = [
  art('清除', [['M2 10l7-7 4 4-7 7z', W, W, 1.4], ['M6 6l4-4 4 4-4 4z', '#f0c064', '#f0c064']]),
  art('清除历史', [[circ(7, 7, 5.5), L, 'none', 1.3], ['M7 4v3h4', L], ['M9 12l4-3 2 3-3 3z', W, '#f0c064']]),
  art('粘贴值', [['M2 2h9v11H2z', '#ef9d5c', 'none', 2], ['M5 4h6', W], ['M6 7h8v5H6z', '#c7cdd4', '#434c57']]),
  art('获取坐标', [['M1 5h7M4 1v8', '#357fb0'], ['M7 4v10l2-2 2 3 1.5-1-1.5-3h3z', W, W]]),
  art('两点距离', [['M2 11h12M2 13h12', Y, 'none', 1.6], [circ(3, 4, 1) + circ(13, 4, 1), C, C]]),
  art('角度', [['M1 13L9 2M1 13h13', L], ['M9 3c3 3 4 6 4 10', O, 'none', 1.4]]),
  art('交点', [['M3 3l10 10M13 3L3 13', '#b5c7d8', 'none', 1.2], [circ(8, 8, 1), C, C]]),
  art('帮助', [[circ(8, 8, 7), '#55b5fa', '#55b5fa'], ['M5.5 6.500c0-3.500 5-3.500 5 0 0 1.500-2.500 1.500-2.500 3.500M8 11.500v1.500', W, 'none', 1.4]]),
];

const KeyGrid: React.FC<{ keys: string[]; height: string }> = ({ keys, height }) => (
  <div className={`mx-[7px] grid auto-rows-fr grid-cols-5 gap-x-[6px] gap-y-1 ${height}`}>
    {keys.map((k) => (
      <button key={k} className="flex items-center justify-center border border-[#838b93] leading-none text-[#e8eaec]">
        {k}
      </button>
    ))}
  </div>
);

const Calculator = () => (
  <aside className="ml-[3px] mr-px mt-px flex w-[249px] shrink-0 flex-col border border-[#383e47] bg-[#434c57] text-[11px] text-[#dfe3e6]">
    <PanelTitle title="计算器" inset />
    <div className="ml-2 mt-[5px] flex w-[170px] justify-between">
      {calcTools.map((t) => (
        <button key={t.name} aria-label={t.name} className="flex h-[19px] w-[19px] items-center justify-center border border-[#7c858f]">
          <Drawing art={t} box={16} className="h-[15px] w-[15px]" />
        </button>
      ))}
    </div>
    <div className="flex flex-1">
      <div className="mt-3 flex-1 pl-[5px] pr-1">
        <div className="h-[68px] border border-[#535b5f]" />
        <input aria-label="表达式" defaultValue="853+" className="mt-[2px] block h-[18px] w-full border border-[#535b5f] bg-transparent pl-px text-xs outline-none" />
        <h3 className="mt-[6px] pl-[2px] text-xs font-bold leading-4">数字键区&lt;&lt;</h3>
        <KeyGrid keys={keypad} height="h-[124px]" />
        <h3 className="mt-[10px] pl-[2px] text-xs font-bold leading-4">科学&lt;&lt;</h3>
        <KeyGrid keys={scientific} height="h-[60px]" />
        <h3 className="mt-[11px] pl-[2px] text-xs font-bold leading-4">变量&lt;&lt;</h3>
        <div className="mt-px flex h-[18px] gap-[3px] pl-[6px] font-['Liberation_Serif',serif] text-[13px] italic leading-4 text-[#55b5fa]">
          <button aria-label="新建变量" className="flex w-[18px] justify-center border border-[#7c858f]">X<span className="text-[9px] leading-[9px] text-[#f0b542]">+</span></button>
          <button aria-label="编辑变量" className="flex w-[18px] justify-center pt-px">X<span className="text-[9px] leading-[9px] text-[#f0b542]">+</span></button>
          <button aria-label="删除变量" className="flex w-[18px] items-end justify-center text-[#a4abb2]">X<span className="text-[9px] leading-[9px]">×</span></button>
          <button aria-label="返回变量" className="flex w-[18px] items-center justify-center">
            <svg viewBox="0 0 9 10" className="h-[10px] w-[9px]"><path d="M0 0h9v10H0z" fill="#f0f0f0" /><path d="M1 2.5h7M2 5h1M4 5h1M6 5h1M2 7h1M4 7h1M6 7h1" stroke="#555" /></svg>
          </button>
        </div>
        <div className="flex h-[117px] border border-[#535b5f]">
          <div className="flex-1 overflow-hidden">
            <p className="flex h-[15px] items-center">
              <svg viewBox="0 0 8 8" className="ml-[5px] h-2 w-2" aria-hidden="true"><path d="M0 0h8v8H0z" fill="#fff" /><path d="M1 4h6" stroke="#334" /></svg>
              <svg viewBox="0 0 14 12" className="ml-[5px] h-3 w-[14px]" aria-hidden="true">
                <path d="M0 0h5l1 2h7v9H0z" fill="#f6b96e" />
                <path d="M6 4c4 0 3 7 7 7M13 4c-4 0-4 7-7 7" stroke="#35a0e8" strokeWidth="1.3" fill="none" />
              </svg>
              <span className="ml-[3px]">变量样例</span>
            </p>
            <ul className="ml-[26px] border-l border-[#4d5761]">
              {['Phi', 'dee', 'ille', 'mee', 'nee', 'rad', 'vee'].map((v, i) => (
                <li key={v} className="flex h-[15px] items-center leading-[15px] even:h-4">
                  <span className={`ml-[9px] w-[12px] text-center font-['Liberation_Serif',serif] text-[13px] text-[#55b5fa] ${i === 0 ? 'font-bold' : 'italic'}`}>
                    {i === 0 ? 'k' : 'X'}
                  </span>
                  <span className="ml-1 text-xs leading-[15px]">{v}</span>
                </li>
              ))}
            </ul>
          </div>
          <div className="flex w-[15px] flex-col justify-between bg-[#3a3e45] py-[2px]">
            <Chevron up />
            <span className="mb-auto mt-1 h-[65px] bg-[#525c67]" />
            <Chevron />
          </div>
        </div>
        <h3 className="leading-4">详细信息</h3>
        <div className="h-[68px] border border-[#535b5f]" />
      </div>
      <div className="mb-1 mr-[3px] flex w-2 flex-col bg-[#3a3e45]">
        <Chevron up />
        <span className="h-[67px] bg-[#525c67]" />
        <span className="flex-1" />
        <Chevron />
      </div>
    </div>
  </aside>
);

const Arrows = () => (
  <svg className="pointer-events-none absolute left-0 top-0 z-30 h-[300px] w-[720px]" stroke="#ee141c" fill="#ee141c" strokeWidth="1.5" aria-hidden="true">
    <path d="M654 82L524 38M441 43l14 130M532 201l36 19" />
    <path d="M513 35l12-1-3 9zM456 184l-6-10h10zM576 226l-11-1 4-8z" strokeWidth="0.5" />
  </svg>
);

const App: React.FC = () => (
  <div className="relative flex min-h-screen flex-col overflow-hidden bg-[#333943] font-['Noto_Sans','Noto_Sans_CJK_SC',sans-serif] select-none">
    <TitleBar />
    <MenuBar />
    <Toolbars />
    <div className="flex flex-1">
      <div className="flex min-w-0 flex-1 flex-col">
        <div className="flex flex-1">
          <LeftTools />
          <Workspace />
          <RightTools />
        </div>
        <CommandLine />
      </div>
      <Properties />
      <Calculator />
    </div>
    <footer className="h-4 bg-[#333943] pt-px font-['Liberation_Mono','Noto_Sans_CJK_SC',monospace] text-[11px] leading-[15px] text-[#8d949c]">
      对选定图形进行锁定，使其不能编辑:<span className="ml-1 text-[9px]">LOCKUP</span>
    </footer>
    <Arrows />
  </div>
);

export default App;
